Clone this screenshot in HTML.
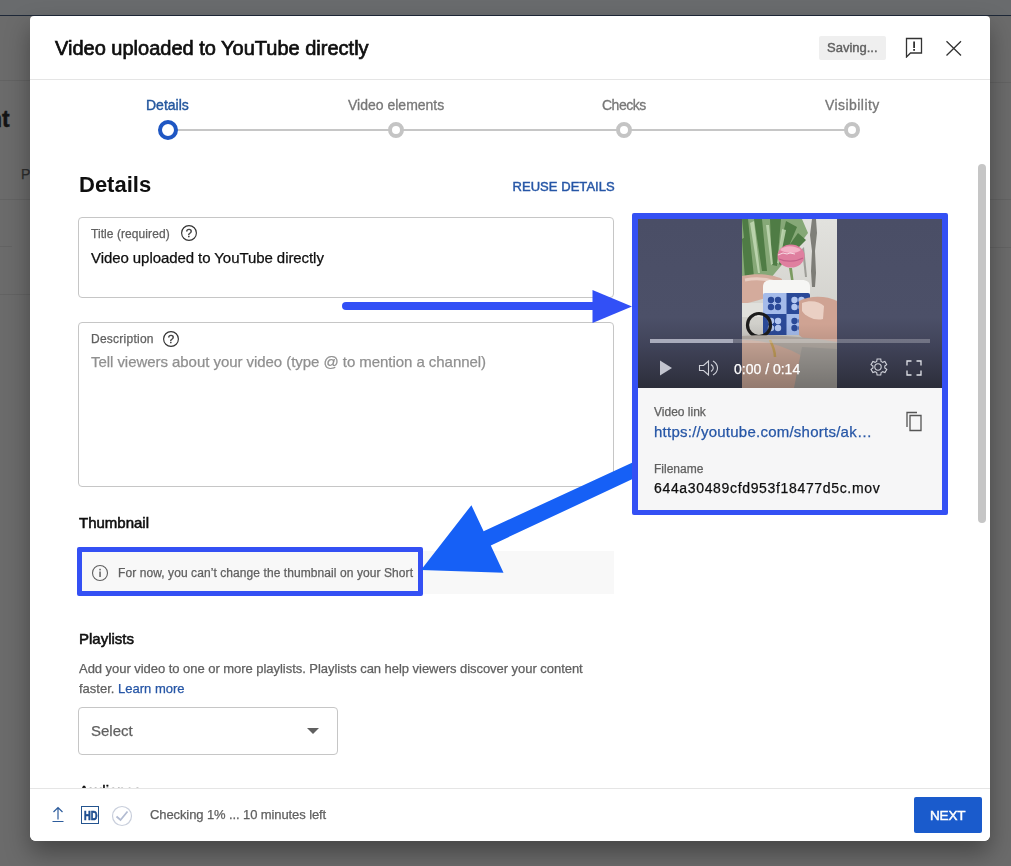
<!DOCTYPE html>
<html><head><meta charset="utf-8">
<style>
*{margin:0;padding:0;box-sizing:border-box}
html,body{width:1011px;height:866px;overflow:hidden}
body{position:relative;background:#6b6b6b;font-family:"Liberation Sans",sans-serif;color:#0f0f0f}
.a{position:absolute;white-space:nowrap;line-height:1;-webkit-text-stroke:0.25px currentColor}
#top{position:absolute;left:0;top:0;width:1011px;height:15px;background:#696b6d}
#topline{position:absolute;left:0;top:15px;width:1011px;height:1px;background:#1e2838}
.bgline{position:absolute;height:1px;background:#636363}
#modal{will-change:transform;position:absolute;left:30px;top:16px;width:960px;height:825px;background:#fff;border-radius:4px 4px 6px 6px;box-shadow:0 12px 24px rgba(0,0,0,.35);overflow:hidden}
.hdrline{position:absolute;left:0;width:960px;height:1px;background:#e5e5e5}
.box{position:absolute;border:1px solid #c6c6c6;border-radius:4px}
.g{color:#606060}
.blue{color:#2656a6}
</style></head><body>
<div id="top"></div><div id="topline"></div>
<div class="bgline" style="left:0;top:80px;width:30px"></div>
<div class="bgline" style="left:0;top:199px;width:30px"></div>
<div class="bgline" style="left:0;top:246px;width:12px"></div>
<div class="bgline" style="left:0;top:294px;width:30px"></div>
<div class="bgline" style="left:990px;top:82px;width:21px"></div>
<div class="bgline" style="left:990px;top:199px;width:21px"></div>
<div class="bgline" style="left:990px;top:247px;width:21px"></div>
<div class="a" style="left:-12px;top:108px;font-size:23px;font-weight:bold;color:#141414;-webkit-text-stroke:0.4px #141414">nt</div>
<div class="a" style="left:21px;top:167px;font-size:14px;color:#2e2e2e">P</div>

<div id="modal">
  <!-- header -->
  <div class="a" id="t_hdr" style="-webkit-text-stroke:0.7px #0f0f0f;left:25px;top:22px;font-size:20px">Video uploaded to YouTube directly</div>
  <div style="position:absolute;left:789px;top:20px;width:67px;height:24px;background:#efefef;border-radius:2px"></div>
  <div class="a g" id="t_saving" style="-webkit-text-stroke:0.4px currentColor;letter-spacing:0px;left:797px;top:25px;font-size:13px">Saving...</div>
  <svg style="position:absolute;left:874px;top:20px" width="20" height="22" viewBox="0 0 20 22"><path d="M2.5 2.5h15v14.5H6.5l-4 4z" fill="none" stroke="#333" stroke-width="1.3"/><rect x="9.2" y="5.5" width="1.8" height="6.5" fill="#333"/><rect x="9.2" y="13" width="1.8" height="1.8" fill="#333"/></svg>
  <svg style="position:absolute;left:914px;top:23px" width="20" height="20" viewBox="0 0 20 20"><path d="M2.5 2.2L17 16.5M17 2.2L2.5 16.5" stroke="#333" stroke-width="1.3"/></svg>
  <div class="hdrline" style="top:63px"></div>

  <!-- stepper -->
  <div style="position:absolute;left:138px;top:113px;width:684px;height:2px;background:#c6c6c6"></div>
  <div style="position:absolute;left:128px;top:104px;width:20px;height:20px;border-radius:50%;border:4px solid #1f57c3;background:#fff"></div>
  <div style="position:absolute;left:358px;top:106px;width:16px;height:16px;border-radius:50%;border:4px solid #c4c4c4;background:#fff"></div>
  <div style="position:absolute;left:586px;top:106px;width:16px;height:16px;border-radius:50%;border:4px solid #c4c4c4;background:#fff"></div>
  <div style="position:absolute;left:814px;top:106px;width:16px;height:16px;border-radius:50%;border:4px solid #c4c4c4;background:#fff"></div>
  <div class="a" id="s1" style="-webkit-text-stroke:0.4px currentColor;left:116px;top:81.5px;font-size:14px;color:#24579e">Details</div>
  <div class="a" id="s2" style="-webkit-text-stroke:0.3px currentColor;left:318px;top:81.5px;font-size:14px;color:#777">Video elements</div>
  <div class="a" id="s3" style="-webkit-text-stroke:0.3px currentColor;letter-spacing:-0.5px;left:572px;top:81.5px;font-size:14px;color:#777">Checks</div>
  <div class="a" id="s4" style="-webkit-text-stroke:0.3px currentColor;letter-spacing:0.44px;left:795px;top:81.5px;font-size:14px;color:#777">Visibility</div>

  <div id="scroll" style="position:absolute;left:948px;top:148px;width:8px;height:359px;border-radius:4px;background:#c6c6c6"></div>


  <!-- video panel -->
  <div style="position:absolute;left:602px;top:197px;width:316px;height:302px;background:#f6f6f7"></div>
  <div id="player" style="position:absolute;left:608px;top:203px;width:304px;height:169px;overflow:hidden;background:linear-gradient(#4a4e66,#4c5068 58%,#41445a 74%,#2c2e3a)">
    <svg style="position:absolute;left:104px;top:0" width="95" height="169" viewBox="0 0 95 169">
      <defs>
        <linearGradient id="wall" x1="0" y1="0" x2="0" y2="1"><stop offset="0" stop-color="#e2e2de"/><stop offset=".6" stop-color="#d2d1cc"/><stop offset="1" stop-color="#b4b0aa"/></linearGradient>
        <linearGradient id="ov" x1="0" y1="0" x2="0" y2="1"><stop offset="0.62" stop-color="#000" stop-opacity="0"/><stop offset="1" stop-color="#000" stop-opacity="0.3"/></linearGradient>
        <filter id="bl" x="-5%" y="-5%" width="110%" height="110%"><feGaussianBlur stdDeviation="0.5"/></filter>
        <pattern id="chk" x="21" y="74" width="47" height="42" patternUnits="userSpaceOnUse">
          <rect width="47" height="42" fill="#2b4a98"/>
          <rect x="0" y="0" width="23.5" height="21" fill="#a4bbea"/>
          <rect x="23.5" y="21" width="23.5" height="21" fill="#a4bbea"/>
          <g fill="#2b4a98"><circle cx="8" cy="7" r="3.2"/><circle cx="15" cy="7" r="3.2"/><circle cx="8" cy="14" r="3.2"/><circle cx="15" cy="14" r="3.2"/><circle cx="31.5" cy="28" r="3.2"/><circle cx="38.5" cy="28" r="3.2"/><circle cx="31.5" cy="35" r="3.2"/><circle cx="38.5" cy="35" r="3.2"/></g>
          <g fill="#b2c6f0"><circle cx="31.5" cy="7" r="3.2"/><circle cx="38.5" cy="7" r="3.2"/><circle cx="31.5" cy="14" r="3.2"/><circle cx="38.5" cy="14" r="3.2"/><circle cx="8" cy="28" r="3.2"/><circle cx="15" cy="28" r="3.2"/><circle cx="8" cy="35" r="3.2"/><circle cx="15" cy="35" r="3.2"/></g>
          <circle cx="11.5" cy="10.5" r="1.8" fill="#a4bbea"/><circle cx="35" cy="31.5" r="1.8" fill="#a4bbea"/>
          <circle cx="35" cy="10.5" r="1.8" fill="#2b4a98"/><circle cx="11.5" cy="31.5" r="1.8" fill="#2b4a98"/>
        </pattern>
      </defs>
      <g filter="url(#bl)">
      <rect width="95" height="169" fill="url(#wall)"/>
      <path d="M70 0h4l1 14-2 18 1 22-1 14h-3l-1-16 1-20-2-16z" fill="#55554f" opacity=".7"/>
      <path d="M62 28l3 30h-2l-3-28z" fill="#77776f" opacity=".6"/>
      <path d="M0 0h60l6 14-12 16-16 18-10 12H0z" fill="#86a877"/>
      <path d="M0 0l6 58h6L6 0zM12 0l8 52h5L20 0zM28 0l2 46 5 1 4-47zM44 2l-10 42 5 2 16-38zM56 14l-20 28 4 3 24-24zM0 20l3 40h4L3 18z" fill="#4f7c44"/>
      <path d="M8 4l8 50h2L12 2zM24 6l5 40 2-1-4-39zM40 10l-5 34 2 1 7-34z" fill="#c6dcb8" opacity=".8"/>
      <path d="M47 49l2 12h2.5l-1.5-12z" fill="#7a9a60"/>
      <ellipse cx="49" cy="37" rx="13.5" ry="11.5" fill="#df7f9f"/>
      <path d="M38 31c4-5 15-5 21 0-4 4-15 4-21 0z" fill="#f3b2c6"/>
      <path d="M37 40c6 3 17 3 24-1" stroke="#c4618a" stroke-width="1.3" fill="none"/>
      <path d="M36 36l5-2 4 1 3-1 5 1" stroke="#fff" stroke-width=".9" fill="none" opacity=".8"/>
      <path d="M0 57c14-3 30-2 40 3l-2 13c-12 6-26 10-38 12z" fill="#d4ab9c"/>
      <path d="M3 61c10-2 22-1 30 2" stroke="#e8cdc2" stroke-width="3" fill="none"/>
      <rect x="0" y="84" width="21" height="14" fill="#e0e0dc"/>
      <path d="M21 77v-9c0-5 3-7 8-7h31c5 0 8 2 8 7v9z" fill="#f6f6f4"/>
      <rect x="21" y="74" width="47" height="42" rx="2" fill="url(#chk)"/>
      <circle cx="17" cy="106" r="11.5" fill="none" stroke="#1c1c1c" stroke-width="3.2"/>
      <path d="M57 82c12-6 28-5 38 0v44c-16 2-30-2-38-10z" fill="#cfa393"/>
      <path d="M60 84c8-3 17-2 22 3l-1 13c-8 2-17-2-21-8z" fill="#ead0c4"/>
      <path d="M0 117c24-2 60 0 95 6v46H0z" fill="#b6aea7"/>
      <path d="M0 121c22 0 42 6 60 16l-4 32H0z" fill="#d2ae9e"/>
      <path d="M60 128l35 2v39H52z" fill="#a8a49f"/>
      <path d="M28 121c3 6 5 12 5 17" stroke="#c9a35c" stroke-width="2.5" fill="none"/>
      </g>
      <rect width="95" height="169" fill="url(#ov)"/>
    </svg>
    <div style="position:absolute;left:12px;top:120px;width:280px;height:4px;background:rgba(255,255,255,.25)"></div>
    <div style="position:absolute;left:12px;top:120px;width:83px;height:4px;background:#a9abbb"></div>
    <svg style="position:absolute;left:20px;top:140px" width="16" height="18" viewBox="0 0 16 18"><path d="M2 1.5v15l12-7.5z" fill="#c3c5cf"/></svg>
    <svg style="position:absolute;left:60px;top:140px" width="22" height="18" viewBox="0 0 22 18"><path d="M1.5 6.5h4l5-4.5v14l-5-4.5h-4z" fill="none" stroke="#d0d2da" stroke-width="1.1"/><path d="M13 5.5c1.5 1 2.3 2.2 2.3 3.5s-.8 2.5-2.3 3.5M15 2c3 1.8 4.5 4.2 4.5 7s-1.5 5.2-4.5 7" fill="none" stroke="#d0d2da" stroke-width="1.1"/></svg>
    <div class="a" id="t_time" style="left:96px;top:143px;font-size:14px;color:#fff">0:00 / 0:14</div>
    <svg style="position:absolute;left:229px;top:137px" width="22" height="22" viewBox="0 0 24 24"><path fill="none" stroke="#d0d2da" stroke-width="1.2" d="M12 15.5a3.5 3.5 0 1 0 0-7 3.5 3.5 0 0 0 0 7z"/><path fill="none" stroke="#d0d2da" stroke-width="1.2" d="M19.4 13a7.7 7.7 0 0 0 0-2l2.1-1.6-2-3.5-2.5 1a7.3 7.3 0 0 0-1.7-1L15 3.3h-4l-.4 2.6a7.3 7.3 0 0 0-1.7 1l-2.5-1-2 3.5L6.5 11a7.7 7.7 0 0 0 0 2l-2.1 1.6 2 3.5 2.5-1a7.3 7.3 0 0 0 1.7 1l.4 2.6h4l.4-2.6a7.3 7.3 0 0 0 1.7-1l2.5 1 2-3.5z"/></svg>
    <svg style="position:absolute;left:268px;top:141px" width="16" height="16" viewBox="0 0 16 16"><path d="M1 5.5V1h4.5M10.5 1H15v4.5M15 10.5V15h-4.5M5.5 15H1v-4.5" fill="none" stroke="#e0e2e8" stroke-width="1.3"/></svg>
  </div>
  <div class="a g" id="t_vlink" style="left:624px;top:390px;font-size:12px">Video link</div>
  <div class="a blue" id="t_url" style="letter-spacing:0.24px;left:624px;top:408px;font-size:15px">https://youtube.com/shorts/ak…</div>
  <svg style="position:absolute;left:874px;top:394px" width="20" height="22" viewBox="0 0 20 22"><path d="M6 5.5h11v15H6z" fill="none" stroke="#555" stroke-width="1.3"/><path d="M3 17V2.5h10" fill="none" stroke="#555" stroke-width="1.3"/></svg>
  <div class="a g" id="t_fnlbl" style="left:624px;top:447px;font-size:12px">Filename</div>
  <div class="a" id="t_fn" style="letter-spacing:0.66px;left:624px;top:465px;font-size:14px">644a30489cfd953f18477d5c.mov</div>

  <!-- content -->
  <div class="a" id="t_details" style="-webkit-text-stroke:0;left:49px;top:158px;font-size:22px;font-weight:bold">Details</div>
  <div class="a blue" id="t_reuse" style="-webkit-text-stroke:0.45px currentColor;left:482.5px;top:164px;font-size:13px;letter-spacing:0.05px">REUSE DETAILS</div>

  <div class="box" style="left:48px;top:201px;width:536px;height:81px"></div>
  <div class="a g" id="t_titlelbl" style="letter-spacing:0.07px;left:61px;top:212px;font-size:12px">Title (required)</div>
  <div class="a" id="t_title" style="letter-spacing:-0.07px;left:61px;top:233.5px;font-size:15px">Video uploaded to YouTube directly</div>

  <div class="box" style="left:48px;top:306px;width:536px;height:165px"></div>
  <div class="a g" id="t_desclbl" style="letter-spacing:0.25px;left:61px;top:317px;font-size:12px">Description</div>
  <div class="a" id="t_ph" style="letter-spacing:-0.05px;left:61px;top:337.5px;font-size:15px;color:#909090">Tell viewers about your video (type @ to mention a channel)</div>


  <svg style="position:absolute;left:150px;top:208px" width="18" height="18" viewBox="0 0 18 18"><circle cx="9" cy="9" r="7.4" fill="none" stroke="#333" stroke-width="1.15"/><text x="9" y="13" font-size="11.5" text-anchor="middle" font-family="Liberation Sans" fill="#333" stroke="#333" stroke-width="0.3">?</text></svg>
  <svg style="position:absolute;left:132px;top:314px" width="18" height="18" viewBox="0 0 18 18"><circle cx="9" cy="9" r="7.4" fill="none" stroke="#333" stroke-width="1.15"/><text x="9" y="13" font-size="11.5" text-anchor="middle" font-family="Liberation Sans" fill="#333" stroke="#333" stroke-width="0.3">?</text></svg>
  <div class="a" id="t_thumb" style="-webkit-text-stroke:0.55px #0f0f0f;letter-spacing:0px;left:49px;top:499px;font-size:15px">Thumbnail</div>
  <div style="position:absolute;left:48px;top:535px;width:536px;height:43px;background:#f8f8f8"></div>
    <svg style="position:absolute;left:61px;top:548px" width="18" height="18" viewBox="0 0 18 18"><circle cx="9" cy="9" r="7.5" fill="none" stroke="#606060" stroke-width="1.1"/><rect x="8.3" y="7.5" width="1.5" height="5.5" fill="#606060"/><rect x="8.3" y="4.8" width="1.5" height="1.6" fill="#606060"/></svg>
  <div class="a g" id="t_info" style="letter-spacing:0.08px;left:88px;top:551px;font-size:12px">For now, you can’t change the thumbnail on your Short</div>

  <div class="a" id="t_pl" style="-webkit-text-stroke:0.55px #0f0f0f;letter-spacing:0px;left:49px;top:615px;font-size:15px">Playlists</div>
  <div class="a g" id="t_pl1" style="letter-spacing:-0.04px;left:49px;top:646px;font-size:13px">Add your video to one or more playlists. Playlists can help viewers discover your content</div>
  <div class="a g" id="t_pl2" style="left:49px;top:666px;font-size:13px">faster. <span class="blue">Learn more</span></div>

  <div class="box" style="left:48px;top:691px;width:260px;height:48px"></div>
  <div class="a g" id="t_select" style="left:61px;top:707px;font-size:15px">Select</div>
  <svg style="position:absolute;left:276px;top:711px" width="14" height="8"><path d="M1 1h12l-6 6z" fill="#606060"/></svg>

  <div class="a" style="-webkit-text-stroke:0.55px #0f0f0f;left:49px;top:767px;font-size:15px">Audience</div>

  <!-- footer -->
  <div style="position:absolute;left:0;top:772px;width:960px;height:53px;background:#fff;border-top:1px solid #e5e5e5"></div>
  <svg style="position:absolute;left:21px;top:789px" width="14" height="18" viewBox="0 0 14 18"><path d="M7 2.5v12M2.5 7l4.5-4.5 4.5 4.5M1.5 16.5h11" fill="none" stroke="#2d5c9c" stroke-width="1.2"/></svg>
  <div style="position:absolute;left:51px;top:790px;width:18px;height:18px;border:1.3px solid #24548f"></div>
  <div class="a" style="left:53.5px;top:793px;font-size:13px;font-weight:bold;color:#1f4f91;letter-spacing:0px;transform:scaleX(.72);transform-origin:0 0;-webkit-text-stroke:0.7px #1f4f91">HD</div>
  <svg style="position:absolute;left:81px;top:789px" width="22" height="22" viewBox="0 0 22 22"><circle cx="11" cy="11" r="9.5" fill="none" stroke="#c9cfdc" stroke-width="1.2"/><path d="M5.5 11.5l4 3.5 7-8.5" fill="none" stroke="#b3bcd2" stroke-width="1.8"/></svg>
  <div class="a g" id="t_check" style="letter-spacing:-0.1px;left:120px;top:792px;font-size:13px">Checking 1% ... 10 minutes left</div>
  <div style="position:absolute;left:884px;top:781px;width:68px;height:36px;background:#1a5bcc;border-radius:2px"></div>
  <div class="a" id="t_next" style="-webkit-text-stroke:0.45px #fff;letter-spacing:-0.15px;left:900px;top:793px;font-size:13.5px;color:#fff">NEXT</div>
</div>

<!-- annotations -->
<div style="position:absolute;left:632px;top:213px;width:316px;height:302px;border:6px solid #3450f4;border-bottom-width:5px;border-radius:2px"></div>
<div style="position:absolute;left:77px;top:547px;width:346px;height:49px;border:5.5px solid #3450f4;border-radius:2px"></div>
<svg style="position:absolute;left:0;top:0" width="1011" height="866">
  <path d="M346 306H595" stroke="#3250f6" stroke-width="8" stroke-linecap="round"/>
  <path d="M592.5 290L632 306.5 592.5 323z" fill="#3250f6"/>
  <path d="M421 570L471.4 505.2 483.6 531.2 632 462.8 632 479.3 490.8 545.4 503.5 572.8z" fill="#1660f6"/>
</svg>
</body></html>
